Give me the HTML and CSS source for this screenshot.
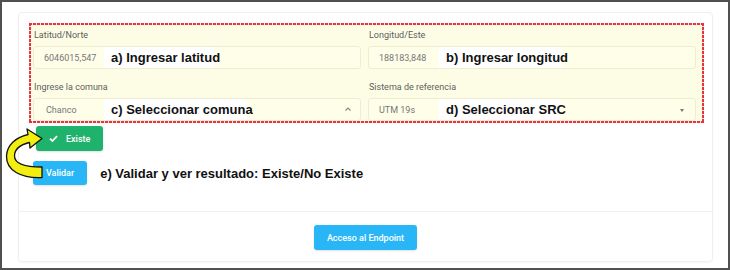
FILE: index.html
```html
<!DOCTYPE html>
<html lang="es">
<head>
    <meta charset="UTF-8">
    <meta name="viewport" content="width=device-width, initial-scale=1.0">
    <title>Validar coordenadas</title>
    <link rel="stylesheet" href="styles.css">
</head>
<body>
    <div class="frame">
        <div class="card">
            <div class="card-body">
                <!-- Campos de coordenadas -->
                <div class="fields">
                    <div class="field">
                        <label class="field-label">Latitud/Norte</label>
                        <div class="input">
                            <span class="value">6046015,547</span>
                            <span class="note">a) Ingresar latitud</span>
                        </div>
                    </div>
                    <div class="field">
                        <label class="field-label">Longitud/Este</label>
                        <div class="input">
                            <span class="value">188183,848</span>
                            <span class="note">b) Ingresar longitud</span>
                        </div>
                    </div>
                    <div class="field">
                        <label class="field-label">Ingrese la comuna</label>
                        <div class="input select-comuna">
                            <span class="value">Chanco</span>
                            <span class="note">c) Seleccionar comuna</span>
                            <svg class="chevron" width="6" height="4" viewBox="0 0 6 4"><path d="M0.5 3.5 L3 1 L5.5 3.5" fill="none" stroke="#8a8a80" stroke-width="1.2"/></svg>
                        </div>
                    </div>
                    <div class="field">
                        <label class="field-label">Sistema de referencia</label>
                        <div class="input">
                            <span class="value">UTM 19s</span>
                            <span class="note">d) Seleccionar SRC</span>
                            <span class="triangle"></span>
                        </div>
                    </div>
                </div>

                <!-- Resultado -->
                <div class="result-row">
                    <button class="btn btn-success">
                        <svg width="9" height="7" viewBox="0 0 9 7"><path d="M1 3.6 L3.4 6 L8 1.2" fill="none" stroke="#ffffff" stroke-width="1.8"/></svg>
                        Existe
                    </button>
                </div>
                <div class="validate-row">
                    <button class="btn btn-info btn-validar">Validar</button>
                    <span class="step-text">e) Validar y ver resultado: Existe/No Existe</span>
                </div>
            </div>
            <div class="card-footer">
                <button class="btn btn-info">Acceso al Endpoint</button>
            </div>
        </div>

        <!-- Flecha amarilla -->
        <svg class="arrow" width="44" height="60" viewBox="2 124 44 60">
            <path d="M42 177.5 C22 178.5 6 171 6.5 156 C7 145 15.5 137.5 28 134.5 L27 129 L42 138.5 L30 148 L29.5 142.5 C21 144.5 14.5 149 14.5 156 C14.5 163 24 167 42 167 Z"
                  fill="#f2ee0f" stroke="#111111" stroke-width="1.3" stroke-linejoin="round"/>
        </svg>
    </div>
</body>
</html>
```

FILE: styles.css
```css
body {
    margin: 0;
    font-family: Roboto, "Noto Sans", sans-serif;
    background: #ffffff;
}

.frame {
    position: relative;
    width: 730px;
    height: 270px;
    box-sizing: border-box;
    border: 2px solid #505050;
    padding: 10px 15px 6px 16px;
    background: #ffffff;
}

.card {
    height: 100%;
    box-sizing: border-box;
    display: flex;
    flex-direction: column;
    border: 1px solid #efefef;
    border-radius: 4px;
    box-shadow: 0 1px 2px rgba(0, 0, 0, 0.04);
}

.card-body {
    flex: 1;
    padding: 10px 8px 0 10px;
}

/* red dashed frame drawn with gradients so the dashes stay short */
.fields {
    display: grid;
    grid-template-columns: 1fr 1fr;
    column-gap: 7px;
    row-gap: 12px;
    padding: 6px 8px 2px 4px;
    background:
        repeating-linear-gradient(90deg, #e8323c 0 3px, #fbe3e3 3px 4px) top left / 100% 2px no-repeat,
        repeating-linear-gradient(90deg, #e8323c 0 3px, #fbe3e3 3px 4px) bottom left / 100% 2px no-repeat,
        repeating-linear-gradient(180deg, #e8323c 0 3px, #fbe3e3 3px 4px) top left / 2px 100% no-repeat,
        repeating-linear-gradient(180deg, #e8323c 0 3px, #fbe3e3 3px 4px) top right / 2px 100% no-repeat,
        #fdfde6;
}

.field-label {
    display: block;
    font-size: 9px;
    line-height: 12px;
    color: #5e5e5e;
    margin-bottom: 5px;
    padding-left: 1px;
}

.input {
    height: 23px;
    box-sizing: border-box;
    display: flex;
    align-items: center;
    padding-left: 10px;
    border: 1px solid #eeedd4;
    border-radius: 3px;
    background: #fefee9;
}

.value {
    width: 60px;
    flex-shrink: 0;
    font-size: 9px;
    color: #777777;
}

.select-comuna .value {
    width: 58px;
    margin-left: 2px;
}

.note {
    align-self: stretch;
    display: flex;
    align-items: center;
    padding-left: 7px;
    font-family: "Liberation Sans", Arial, sans-serif;
    font-weight: bold;
    font-size: 13px;
    color: #111111;
    white-space: nowrap;
    background: linear-gradient(#ffffff, #ffffff) no-repeat left / calc(100% - 6px) 100%;
}

.chevron {
    margin-left: auto;
    margin-right: 9px;
    margin-top: -1px;
}

.triangle {
    margin-left: auto;
    margin-right: 11px;
    margin-top: 2px;
    width: 0;
    height: 0;
    border-left: 2.5px solid transparent;
    border-right: 2.5px solid transparent;
    border-top: 3px solid #777777;
}

.btn {
    height: 25px;
    padding: 0 13px;
    border: none;
    border-radius: 3px;
    font-family: Roboto, sans-serif;
    font-size: 9px;
    font-weight: 500;
    color: #ffffff;
    display: inline-flex;
    align-items: center;
    gap: 8px;
    cursor: pointer;
}

.btn-success {
    background-color: #1fb26c;
    box-shadow: 0 1px 2px rgba(0, 0, 0, 0.12);
}

.btn-info {
    background-color: #29b6f6;
    box-shadow: 0 1px 2px rgba(0, 0, 0, 0.12);
}

.result-row {
    margin-top: 3px;
    padding-left: 7px;
}

.validate-row {
    display: flex;
    align-items: center;
    margin-top: 10px;
    padding-left: 4px;
}

.btn-validar {
    height: 24px;
}

.step-text {
    margin-left: 13px;
    font-family: "Liberation Sans", Arial, sans-serif;
    font-weight: bold;
    font-size: 13px;
    color: #111111;
}

.card-footer {
    border-top: 1px solid #efefef;
    padding: 13px 0 11px;
    display: flex;
    justify-content: center;
}

.arrow {
    position: absolute;
    left: 0;
    top: 122px;
}
```
